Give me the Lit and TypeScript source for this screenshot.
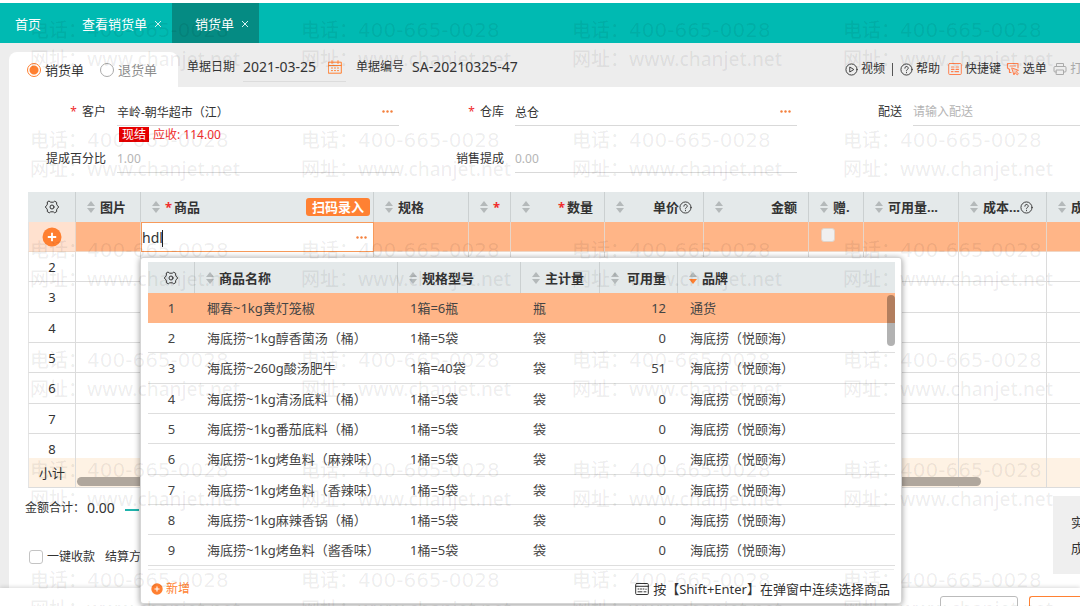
import { LitElement, html, svg, css, nothing } from "lit";
import { customElement } from "lit/decorators.js";
import { classMap } from "lit/directives/class-map.js";

interface Column {
  width: number;
  label?: string;
  required?: boolean;
  end?: boolean;
  help?: boolean;
  scan?: boolean;
  sorted?: boolean;
}

const ORDER_COLUMNS: Column[] = [
  { width: 48 },
  { width: 65, label: "图片" },
  { width: 233, label: "商品", required: true, scan: true },
  { width: 95, label: "规格" },
  { width: 42, label: "", required: true },
  { width: 94, label: "数量", required: true, end: true },
  { width: 99, label: "单价", end: true, help: true },
  { width: 105, label: "金额", end: true },
  { width: 55, label: "赠." },
  { width: 95, label: "可用量..." },
  { width: 88, label: "成本...", help: true },
  { width: 88, label: "成" },
];

const PRODUCT_COLUMNS: Column[] = [
  { width: 47 },
  { width: 203, label: "商品名称" },
  { width: 123, label: "规格型号" },
  { width: 79, label: "主计量" },
  { width: 78, label: "可用量", end: true },
  { width: 217, label: "品牌", sorted: true },
];

const PRODUCTS = [
  ["椰春~1kg黄灯笼椒", "1箱=6瓶", "瓶", "12", "通货"],
  ["海底捞~1kg醇香菌汤（桶）", "1桶=5袋", "袋", "0", "海底捞（悦颐海）"],
  ["海底捞~260g酸汤肥牛", "1箱=40袋", "袋", "51", "海底捞（悦颐海）"],
  ["海底捞~1kg清汤底料（桶）", "1桶=5袋", "袋", "0", "海底捞（悦颐海）"],
  ["海底捞~1kg番茄底料（桶）", "1桶=5袋", "袋", "0", "海底捞（悦颐海）"],
  ["海底捞~1kg烤鱼料（麻辣味）", "1桶=5袋", "袋", "0", "海底捞（悦颐海）"],
  ["海底捞~1kg烤鱼料（香辣味）", "1桶=5袋", "袋", "0", "海底捞（悦颐海）"],
  ["海底捞~1kg麻辣香锅（桶）", "1桶=5袋", "袋", "0", "海底捞（悦颐海）"],
  ["海底捞~1kg烤鱼料（酱香味）", "1桶=5袋", "袋", "0", "海底捞（悦颐海）"],
];

const icon = (size: number, body: unknown) =>
  html`<svg class="icon" width=${size} height=${size} viewBox="0 0 14 14" fill="none"
    stroke="currentColor" stroke-linecap="round" stroke-linejoin="round" aria-hidden="true">${body}</svg>`;

const gear = () => icon(14, svg`
  <path d="M4.300 1.200 5.700 2.200h2.600l1.400-1 2 1.200-.1 1.800 1 1.600 1.100 1.200-1.100 1.200-1 1.600.1 1.800-2 1.200-1.400-1H5.700l-1.400 1-2-1.200.1-1.800-1-1.600L.3 7l1.100-1.200 1-1.600-.1-1.800z"/>
  <circle cx="7" cy="7" r="2"/>`);
const help = () => icon(13, svg`<circle cx="7" cy="7" r="6"/>
  <path d="M5.200 5.600a1.800 1.800 0 1 1 2.700 1.500c-.6.4-.9.600-.9 1.300M7 10.200v.3"/>`);
const play = () => icon(13, svg`<circle cx="7" cy="7" r="6"/><path d="M5.500 4.500 9.500 7l-4 2.500z"/>`);
const keyboard = () => icon(14, svg`<rect x=".7" y="1.500" width="12.600" height="11" rx="1"/>
  <path d="M3.500 5H6M8 5h2.500M3.500 7.300H6M8 7.300h2.500M3.500 9.700H5M7 9.700h3.500" stroke-width="1.200"/>`);
const pick = () => icon(14, svg`<path d="M5 10.500H3.500V7.500M3.500 7.500 1.500 6V1.500h10.500v4.300M4 4h5.500" stroke-width="1.200"/>
  <path d="m6 6 6.500 2.300-2.400 1.100 2.300 2.400-1.100 1.100-2.400-2.300-.8 2z" fill="currentColor" fill-opacity=".25"/>`);
const printer = () => icon(14, svg`<path d="M3.500 4.500v-3h7v3M3.500 10H2a1 1 0 0 1-1-1V5.500a1 1 0 0 1 1-1h10a1 1 0 0 1 1 1V9a1 1 0 0 1-1 1h-1.500"/>
  <rect x="3.500" y="8" width="7" height="4.500"/>`);
const calendar = () => icon(14, svg`<rect x=".7" y="2.200" width="12.600" height="11"/>
  <path d="M.7 5.500h12.600M4 .7v2.800M10 .7v2.800M3.500 8h1M6.500 8h1M9.500 8h1M3.500 10.600h1M6.500 10.600h1M9.500 10.600h1"/>`);
const keyPanel = () => icon(14, svg`<rect x=".7" y="1.500" width="12.600" height="11" rx="1"/>
  <path d="M.7 4.300h12.600M3 7h1M5.500 7h1M8 7h1M11 7v.5M3 9.800h4M9 9.800h2"/>`);
const plus = (size: number) => html`<svg class="icon" width=${size} height=${size} viewBox="0 0 20 20" aria-hidden="true">
  <circle cx="10" cy="10" r="9.500" fill="#ff7f30"/><path d="M5.800 10h8.400M10 5.800v8.400" stroke="#fff" stroke-width="1.800"/></svg>`;
const sorter = (on = false) => html`<svg class="sorter" width="8" height="12" viewBox="0 0 8 12" aria-hidden="true">
  <path d="M0 5 4 0l4 5z" fill="#b4b9ba"/><path d="M0 7l4 5 4-5z" fill=${on ? "#ff7f30" : "#b4b9ba"}/></svg>`;
const close = () => html`<svg class="icon" width="8" height="8" viewBox="0 0 8 8" stroke="#d6f4f2" aria-hidden="true">
  <path d="M1 1l6 6M7 1 1 7"/></svg>`;
const more = () => html`<svg class="icon" width="11" height="3" viewBox="0 0 11 3" fill="#f4803c" aria-hidden="true">
  <circle cx="1.500" cy="1.500" r="1.200"/><circle cx="5.500" cy="1.500" r="1.200"/><circle cx="9.500" cy="1.500" r="1.200"/></svg>`;

@customElement("app-root")
export class AppRoot extends LitElement {
  static styles = css`
    :host {
      display: flex;
      flex-direction: column;
      position: relative;
      height: 100vh;
      overflow: hidden;
      background: #ededed;
      color: #333;
      font: 12px/20px "Noto Sans", "Noto Sans CJK SC", sans-serif;
      white-space: nowrap;
    }
    *, *::before { box-sizing: border-box; }
    input, button {
      font: inherit;
      color: inherit;
      padding: 0;
      margin: 0;
      border: 0;
      background: none;
      outline: none;
      min-width: 0;
    }
    button { display: inline-flex; align-items: center; justify-content: center; }
    input::placeholder { color: #b5b5b5; opacity: 1; }
    .icon, .sorter { display: block; flex: none; }

    .nav {
      display: flex;
      flex: none;
      height: 43px;
      border-top: 3px solid #fff;
      background: #00bab2;
      font-size: 13px;
    }
    .tab {
      display: flex;
      align-items: center;
      gap: 7px;
      padding: 2px 10px 0 15px;
      color: #fff;
      text-decoration: none;
    }
    .tab.wide { padding-left: 31px; }
    .tab.active { background: #058b83; padding-left: 23px; }

    .head { display: flex; flex: none; height: 44px; padding-left: 9px; }
    .kinds {
      display: flex;
      align-items: center;
      gap: 16px;
      width: 169px;
      margin-top: 9px;
      padding-left: 18px;
      border-radius: 8px 8px 0 0;
      background: #fff;
      font-size: 13px;
    }
    .kind { display: flex; align-items: center; gap: 4px; }
    .kind.off { color: #8c8c8c; }
    .kind input {
      appearance: none;
      width: 14px;
      height: 14px;
      border: 1px solid #aaa;
      border-radius: 50%;
    }
    .kind input:checked {
      border-color: #ff7f30;
      background: radial-gradient(#ff7f30 4px, #fff 5px);
    }
    .doc { display: flex; align-items: center; padding: 4px 0 0 9px; gap: 8px; }
    .date {
      display: flex;
      align-items: center;
      width: 103px;
      height: 29px;
      padding-right: 4px;
      border-bottom: 1px solid #dcdcdc;
      color: #ff7f30;
    }
    .date input { flex: 1; color: #333; font-size: 14px; }
    .doc .number { font-size: 14px; }
    .doc .gap { padding-left: 2px; }
    .tools {
      display: flex;
      align-items: center;
      flex: 0 0 235px;
      gap: 12px;
      margin-left: auto;
      padding-top: 8px;
      overflow: hidden;
    }
    .tools .pair { display: flex; align-items: center; gap: 7px; }
    .tools button { gap: 3px; }
    .tools .orange .icon { color: #ff8150; }
    .tools .muted { color: #aaa; }
    .bar { width: 1px; height: 13px; background: #555; }

    .panel { flex: none; margin-left: 9px; background: #fff; }
    .form {
      display: grid;
      grid-template-columns: repeat(3, minmax(398px, 1fr));
      height: 105px;
      padding-top: 11px;
      overflow: hidden;
    }
    .field { display: grid; grid-template-columns: 97px 1fr; column-gap: 11px; align-content: start; padding-right: 8px; }
    .field label { line-height: 27px; text-align: right; }
    .star { color: #f02d2d; font-style: normal; margin-right: 2px; }
    .entry { display: flex; align-items: center; height: 28px; padding-right: 6px; border-bottom: 1px solid #d9d9d9; }
    .entry input { flex: 1; height: 26px; }
    .hint { display: flex; grid-column: 2; align-items: center; gap: 4px; height: 19px; padding: 0 0 2px 2px; color: #f02d2d; }
    .tag { padding: 0 3px; background: #e60000; color: #fff; line-height: 15px; }

    .grid { position: relative; margin-left: 19px; }
    .clip { overflow: hidden; }
    .rows { height: 266px; }
    table { table-layout: fixed; border-collapse: separate; border-spacing: 0; font-size: 13px; }
    th, td { padding: 0; }
    tr { height: 30px; }
    tbody tr:nth-child(3n) { height: 31px; }
    th { height: 30px; background: #e4e9ea; color: #333; text-align: left; }
    th:not(:last-child) { border-right: 1px solid #cbd0d1; }
    .cap { display: flex; align-items: center; gap: 5px; padding: 0 11px; }
    .cap.mid { justify-content: center; padding: 0; font-weight: 400; }
    .cap .text { display: flex; align-items: center; }
    .cap.end .text { margin-left: auto; }
    .cap.scan { padding-right: 3px; }
    .scan-btn {
      margin-left: auto;
      width: 64px;
      height: 18px;
      border-radius: 3px;
      background: #ff8133;
      color: #fff;
      font-weight: 700;
    }
    .orders td { border-right: 1px solid #dcdcdc; border-bottom: 1px solid #dcdcdc; }
    .orders td:first-child { border-left: 1px solid #e4e4e4; text-align: center; }
    .orders .current td { background: #ffb587; border-bottom-color: #f0d6c4; border-right-color: #e8d5c8; }
    .orders .current td:first-child { background: #ffe1cf; }
    .orders .current .editing { background: #fff; border: 1px solid #f79a5b; }
    .add { display: flex; width: 100%; height: 29px; }
    .edit { display: flex; position: relative; align-items: center; padding-right: 6px; }
    .edit input { flex: 1; height: 26px; font-size: 14px; }
    .caret { position: absolute; left: 20px; top: 6px; width: 1px; height: 17px; background: #222; }
    .tick {
      appearance: none;
      display: block;
      width: 14px;
      height: 14px;
      border: 1px solid #c4c4c4;
      border-radius: 3px;
      background: #fff;
    }
    .orders .tick { margin: -4px 0 0 12px; background: #f0f0f0; border-color: #e2d4ca; }
    .subtotal td { background: #fef2e4; }
    .track { position: absolute; left: 49px; right: 99px; bottom: 2px; height: 9px; border-radius: 5px; background: #b0a79d; }

    .picker {
      position: absolute;
      z-index: 2;
      left: 112px;
      top: 65px;
      width: 762px;
      padding: 4px 7px 0;
      border: 1px solid #d5d5d5;
      border-radius: 3px;
      background: #fff;
      box-shadow: 0 1px 6px rgba(0, 0, 0, 0.4);
    }
    .picker td { border-bottom: 1px solid #dedede; padding: 0 12px; color: #444; }
    .picker td:first-child { padding: 0; text-align: center; }
    .picker .num { text-align: right; }
    .picker .hit td { background: #ffb587; border-color: #ffb587; }
    .picker thead tr { height: 31px; }
    .thumb { position: absolute; top: 37px; right: 6px; width: 8px; height: 51px; border-radius: 4px; background: rgba(0, 0, 0, 0.3); }
    .picker footer {
      display: flex;
      align-items: center;
      justify-content: space-between;
      height: 34px;
      margin-top: 3px;
      padding: 5px 4px 0 3px;
      border-top: 1px solid #ececec;
      font-size: 13px;
    }
    .picker footer button { gap: 3px; color: #ff7f30; font-size: 12px; }
    .tip { display: flex; align-items: center; gap: 4px; }

    .summary { display: flex; height: 100px; }
    .sums { flex: 1; padding: 10px 0 0 16px; }
    .total { display: flex; align-items: center; gap: 2px; }
    .total output { font-size: 14px; }
    .total i { width: 14px; height: 2px; margin: 3px 0 0 8px; background: #1fb3ac; }
    .pay { display: flex; align-items: center; gap: 10px; margin-top: 29px; padding-left: 4px; }
    .pay label { display: flex; align-items: center; gap: 4px; }
    .costs { flex: 0 0 27px; height: 78px; margin-top: 8px; padding: 13px 0 0 18px; overflow: hidden; background: #efefef; line-height: 26px; font-size: 13px; }

    .actions {
      display: flex;
      flex: 1;
      justify-content: flex-end;
      gap: 11px;
      padding-top: 8px;
      background: #fff;
      box-shadow: 0 -1px 4px rgba(0, 0, 0, 0.15);
    }
    .actions button { flex: none; width: 78px; height: 28px; border: 1px solid #bbb; border-radius: 3px; }
    .actions .main { width: 51px; border-color: #ff8133; border-right: 0; border-radius: 3px 0 0 3px; }

    .marks {
      display: grid;
      grid-template-columns: repeat(4, 271px);
      position: absolute;
      z-index: 5;
      inset: 0;
      padding-left: 30px;
      overflow: hidden;
      pointer-events: none;
      color: rgba(0, 0, 0, 0.07);
      font-size: 19px;
      font-weight: 500;
      line-height: 29px;
    }
    .mark { height: 110px; padding-top: 16px; }
    .mark div { display: flex; height: 29px; }
    .mark .phone { font-family: "DejaVu Sans", sans-serif; font-size: 20px; }
  `;

  private cols(columns: Column[]) {
    return html`<colgroup>${columns.map((c) => html`<col style="width:${c.width}px" />`)}</colgroup>`;
  }

  private width(columns: Column[]) {
    return columns.reduce((sum, c) => sum + c.width, 0);
  }

  private headRow(columns: Column[]) {
    return html`<thead><tr>${columns.map((c, i) => i === 0
      ? html`<th><div class="cap mid">${gear()}</div></th>`
      : html`<th><div class=${classMap({ cap: true, end: !!c.end, scan: !!c.scan })}>
          ${sorter(c.sorted)}
          <span class="text">${c.required ? html`<i class="star">*</i>` : nothing}${c.label}${c.help ? help() : nothing}</span>
          ${c.scan ? html`<button class="scan-btn">扫码录入</button>` : nothing}
        </div></th>`)}</tr></thead>`;
  }

  private orderCell(column: number) {
    if (column === 0) return html`<td><button class="add" aria-label="新增行">${plus(20)}</button></td>`;
    if (column === 2) {
      return html`<td class="editing"><div class="edit">
        <input aria-label="商品" .value=${"hdl"} /><span class="caret"></span>${more()}</div></td>`;
    }
    if (column === 8) return html`<td><input class="tick" type="checkbox" aria-label="赠品" /></td>`;
    return html`<td></td>`;
  }

  private field(id: string, label: string, value: string, options: { required?: boolean; more?: boolean; placeholder?: string } = {}) {
    return html`<label for=${id}>${options.required ? html`<i class="star">*</i> ` : nothing}${label}</label>
      <div class="entry"><input id=${id} .value=${value} placeholder=${options.placeholder ?? ""} />${options.more ? more() : nothing}</div>`;
  }

  render() {
    return html`
      <nav class="nav">
        <a class="tab" href="#home">首页</a>
        <a class="tab wide" href="#list">查看销货单 ${close()}</a>
        <a class="tab active" href="#order">销货单 ${close()}</a>
      </nav>

      <header class="head">
        <div class="kinds">
          <label class="kind"><input type="radio" name="kind" checked />销货单</label>
          <label class="kind off"><input type="radio" name="kind" />退货单</label>
        </div>
        <div class="doc">
          <label for="date">单据日期</label>
          <div class="date"><input id="date" .value=${"2021-03-25"} />${calendar()}</div>
          <span class="gap">单据编号</span><span class="number">SA-20210325-47</span>
        </div>
        <div class="tools">
          <div class="pair"><button>${play()}视频</button><span class="bar"></span><button>${help()}帮助</button></div>
          <button class="orange">${keyboard()}快捷键</button>
          <button class="orange">${pick()}选单</button>
          <button class="muted">${printer()}打</button>
        </div>
      </header>

      <main class="panel">
        <section class="form">
          <div class="field">
            ${this.field("customer", "客户", "辛岭-朝华超市（江）", { required: true, more: true })}
            <div class="hint"><span class="tag">现结</span>应收: 114.00</div>
            ${this.field("percent", "提成百分比", "", { placeholder: "1.00" })}
          </div>
          <div class="field">
            ${this.field("store", "仓库", "总仓", { required: true, more: true })}
            <div class="hint"></div>
            ${this.field("commission", "销售提成", "", { placeholder: "0.00" })}
          </div>
          <div class="field">${this.field("delivery", "配送", "", { placeholder: "请输入配送" })}</div>
        </section>

        <section class="grid">
          <div class="clip rows">
            <table class="orders" style="width:${this.width(ORDER_COLUMNS)}px">
              ${this.cols(ORDER_COLUMNS)}${this.headRow(ORDER_COLUMNS)}
              <tbody>
                <tr class="current">${ORDER_COLUMNS.map((_, i) => this.orderCell(i))}</tr>
                ${[2, 3, 4, 5, 6, 7, 8].map((n) => html`<tr>${ORDER_COLUMNS.map((_, i) => html`<td>${i === 0 ? n : nothing}</td>`)}</tr>`)}
              </tbody>
            </table>
          </div>
          <div class="clip">
            <table class="orders" style="width:${this.width(ORDER_COLUMNS)}px">
              ${this.cols(ORDER_COLUMNS)}
              <tbody><tr class="subtotal">${ORDER_COLUMNS.map((_, i) => html`<td>${i === 0 ? "小计" : nothing}</td>`)}</tr></tbody>
            </table>
          </div>
          <div class="track"></div>

          <div class="picker">
            <table style="width:${this.width(PRODUCT_COLUMNS)}px">
              ${this.cols(PRODUCT_COLUMNS)}${this.headRow(PRODUCT_COLUMNS)}
              <tbody>${PRODUCTS.map((p, i) => html`<tr class=${classMap({ hit: i === 0 })}>
                <td>${i + 1}</td>${p.map((v, c) => html`<td class=${classMap({ num: c === 3 })}>${v}</td>`)}</tr>`)}</tbody>
            </table>
            <div class="thumb"></div>
            <footer>
              <button>${plus(12)}新增</button>
              <span class="tip">${keyPanel()}按【Shift+Enter】在弹窗中连续选择商品</span>
            </footer>
          </div>
        </section>

        <section class="summary">
          <div class="sums">
            <div class="total"><span>金额合计：</span><output>0.00</output><i></i></div>
            <div class="pay"><label><input class="tick" type="checkbox" />一键收款</label><span>结算方式</span></div>
          </div>
          <div class="costs"><div>实</div><div>成</div></div>
        </section>
      </main>

      <div class="actions"><button aria-label="取消"></button><button class="main" aria-label="保存"></button></div>

      <div class="marks" aria-hidden="true">
        ${Array.from({ length: 24 }, () => html`<div class="mark">
          <div>电话：<span class="phone">400-665-0028</span></div><div>网址：www.chanjet.net</div></div>`)}
      </div>
    `;
  }
}
